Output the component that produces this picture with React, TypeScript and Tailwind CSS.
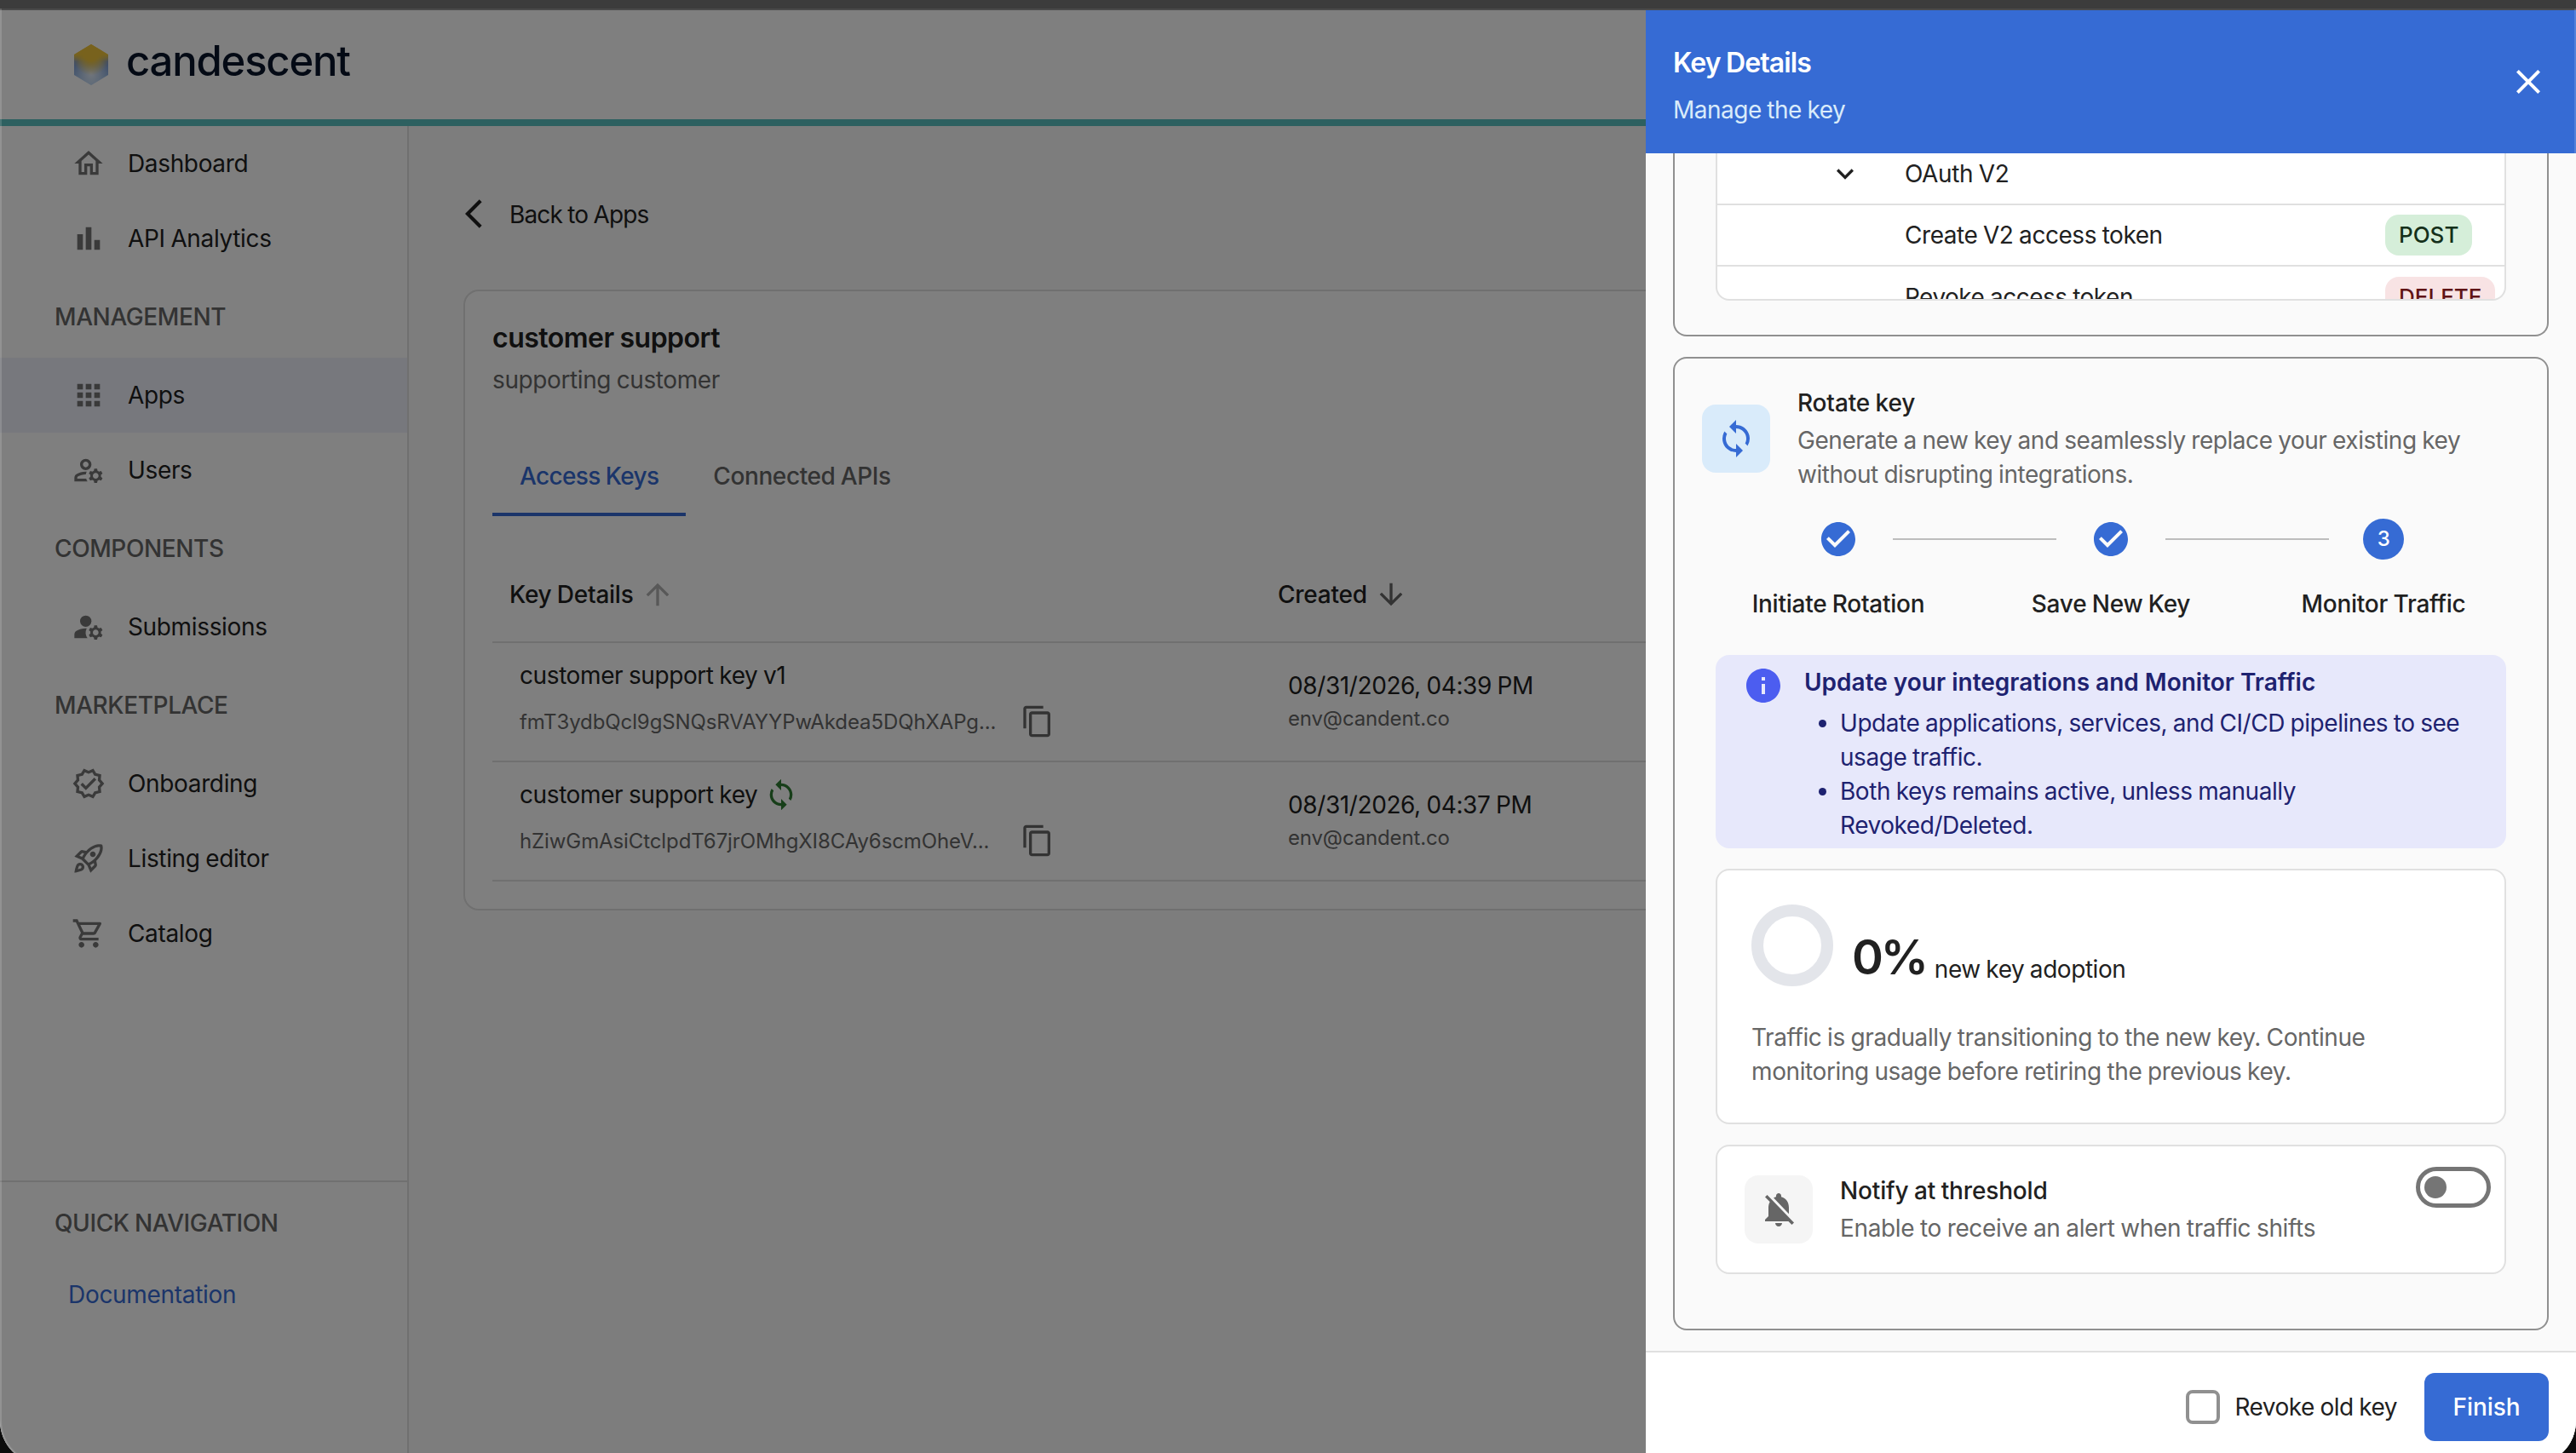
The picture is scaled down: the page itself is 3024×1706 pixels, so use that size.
import type { ReactNode } from 'react';
import type { IconType } from 'react-icons';
import {
  MdApps,
  MdArrowBackIosNew,
  MdArrowDownward,
  MdArrowUpward,
  MdBarChart,
  MdCheckCircle,
  MdClose,
  MdContentCopy,
  MdExpandMore,
  MdInfo,
  MdManageAccounts,
  MdNotificationsOff,
  MdOutlineHome,
  MdOutlineManageAccounts,
  MdOutlineRocketLaunch,
  MdOutlineShoppingCart,
  MdOutlineVerified,
  MdSync,
} from 'react-icons/md';

function NavItem({ icon: Icon, label, active }: { icon: IconType; label: string; active?: boolean }) {
  return (
    <a className={`flex h-[88px] items-center gap-[26px] pl-[84px] tracking-[-0.35px] ${active ? 'bg-[#eef0fb]' : ''}`}>
      <Icon size={40} className="text-[#757575]" />
      <span>{label}</span>
    </a>
  );
}

function NavHeading({ children }: { children: ReactNode }) {
  return <div className="flex h-24 items-center pl-16 font-medium text-[#666]">{children}</div>;
}

function Logo() {
  return (
    <div className="flex items-center gap-[21px] pl-[87px]">
      <svg width="40" height="48" viewBox="0 0 40 48">
        <defs>
          <linearGradient id="body" x1="0" y1="0" x2="0" y2="1">
            <stop offset="0.25" stopColor="#f0c53a" />
            <stop offset="0.42" stopColor="#7f9bd0" />
            <stop offset="1" stopColor="#9fc4ec" />
          </linearGradient>
          <radialGradient id="glow" cx="0.5" cy="0.72" r="0.5">
            <stop offset="0" stopColor="#ffffff" stopOpacity="0.75" />
            <stop offset="1" stopColor="#ffffff" stopOpacity="0" />
          </radialGradient>
          <radialGradient id="cap" cx="0.5" cy="0.16" r="0.6">
            <stop offset="0.4" stopColor="#f0c53a" />
            <stop offset="1" stopColor="#f0c53a" stopOpacity="0" />
          </radialGradient>
        </defs>
        <path d="M20 0 40 12v24L20 48 0 36V12z" fill="url(#body)" />
        <path d="M20 0 40 12v24L20 48 0 36V12z" fill="url(#glow)" />
        <path d="M20 0 40 12v24L20 48 0 36V12z" fill="url(#cap)" />
      </svg>
      <span className="mt-[-8px] text-[49px] leading-[60px] font-medium tracking-[-1.2px] text-[#08142a]">candescent</span>
    </div>
  );
}

function Sidebar() {
  return (
    <nav className="flex w-[480px] shrink-0 flex-col border-r-2 border-[#e0e0e0] bg-white">
      <NavItem icon={MdOutlineHome} label="Dashboard" />
      <NavItem icon={MdBarChart} label="API Analytics" />
      <NavHeading>MANAGEMENT</NavHeading>
      <NavItem icon={MdApps} label="Apps" active />
      <NavItem icon={MdOutlineManageAccounts} label="Users" />
      <NavHeading>COMPONENTS</NavHeading>
      <NavItem icon={MdManageAccounts} label="Submissions" />
      <NavHeading>MARKETPLACE</NavHeading>
      <NavItem icon={MdOutlineVerified} label="Onboarding" />
      <NavItem icon={MdOutlineRocketLaunch} label="Listing editor" />
      <NavItem icon={MdOutlineShoppingCart} label="Catalog" />
      <div className="mt-[246px] border-t-2 border-[#e0e0e0]">
        <NavHeading>QUICK NAVIGATION</NavHeading>
        <a className="block pt-4 pl-20 tracking-[-0.3px] text-[#366bd4]">Documentation</a>
      </div>
    </nav>
  );
}

const keys = [
  { name: 'customer support key v1', value: 'fmT3ydbQcl9gSNQsRVAYYPwAkdea5DQhXAPg...', date: '08/31/2026, 04:39 PM', rotating: false },
  { name: 'customer support key', value: 'hZiwGmAsiCtclpdT67jrOMhgXI8CAy6scmOheV...', date: '08/31/2026, 04:37 PM', rotating: true },
];

function AppPage() {
  return (
    <main className="flex-1 bg-[#fafafa] pt-[83px] pl-16">
      <a className="-ml-2 flex h-10 items-center gap-[22px]">
        <MdArrowBackIosNew size={40} />
        <span className="pt-0.5 tracking-[-0.85px]">Back to Apps</span>
      </a>

      <section className="mt-[69px] mr-16 h-[729px] rounded-[18px] border-2 border-[#e0e0e0] bg-white px-8 pt-[31px]">
        <h1 className="text-[32px] leading-[48px] font-semibold tracking-[-0.5px]">customer support</h1>
        <p className="mt-[5px] text-[#666]">supporting customer</p>

        <div className="mt-[45px] flex font-medium text-[#666]">
          <div className="h-[95px] border-b-4 border-[#366bd4] px-8 pt-7 tracking-[-0.65px] text-[#366bd4]">Access Keys</div>
          <div className="px-8 pt-7">Connected APIs</div>
        </div>

        <div className="mt-[35px] grid h-[114px] grid-cols-[902px_1fr] items-center border-b-2 border-[#e0e0e0] pt-0.5 pl-5 font-medium tracking-[-0.25px]">
          <div className="flex items-center gap-2">
            Key Details
            <MdArrowUpward size={40} className="text-[#b0b0b0]" />
          </div>
          <div className="flex items-center gap-2">
            Created
            <MdArrowDownward size={40} className="text-[#666]" />
          </div>
        </div>

        {keys.map((key) => (
          <div key={key.name} className="grid h-[140px] grid-cols-[902px_1fr] border-b-2 border-[#e0e0e0] pl-8">
            <div className="pt-[18px]">
              <div className="flex h-10 items-center gap-2">
                {key.name}
                {key.rotating && <MdSync size={40} className="text-[#2e7d32]" />}
              </div>
              <div className="mt-[14px] flex h-10 items-center">
                <span className="w-[588px] pt-px text-2xl tracking-[-0.1px] text-[#666]">{key.value}</span>
                <MdContentCopy size={40} className="text-[#666]" />
              </div>
            </div>
            <div className="pt-[30px]">
              <div className="leading-10">{key.date}</div>
              <div className="mt-px text-2xl leading-9 tracking-[-0.15px] text-[#666]">env@candent.co</div>
            </div>
          </div>
        ))}
      </section>
    </main>
  );
}

function Step({ label, children }: { label: string; children: ReactNode }) {
  return (
    <div className="flex w-32 shrink-0 flex-col items-center gap-8">
      <div className="flex size-12 items-center justify-center text-[#366bd4]">{children}</div>
      <span className="font-medium tracking-[-0.25px] whitespace-nowrap">{label}</span>
    </div>
  );
}

function RotateKeyCard() {
  return (
    <section className="mt-6 h-[1143px] rounded-2xl border-2 border-[#909090] px-12">
      <div className="-ml-4 flex gap-8 pt-8">
        <div className="mt-[22px] flex size-20 items-center justify-center rounded-2xl bg-[#d9ebfa]">
          <MdSync size={48} className="text-[#366bd4]" />
        </div>
        <div className="flex-1 leading-10">
          <h3 className="font-medium tracking-[-0.15px]">Rotate key</h3>
          <p className="mt-1 tracking-[-0.45px] text-[#666]">
            Generate a new key and seamlessly replace your existing key
            <br />
            without disrupting integrations.
          </p>
        </div>
      </div>

      <div className="mt-8 flex justify-center">
        <Step label="Initiate Rotation">
          <MdCheckCircle size={48} />
        </Step>
        <div className="mt-[23px] h-0.5 w-48 bg-[#bdbdbd]" />
        <Step label="Save New Key">
          <MdCheckCircle size={48} />
        </Step>
        <div className="mt-[23px] h-0.5 w-48 bg-[#bdbdbd]" />
        <Step label="Monitor Traffic">
          <span className="flex size-12 items-center justify-center rounded-full bg-[#366bd4] text-2xl font-medium text-white">3</span>
        </Step>
      </div>

      <div className="mt-10 flex h-[227px] gap-6 rounded-2xl bg-[#e7e8fb] px-8 text-[#1e2270]">
        <MdInfo size={48} className="mt-3 shrink-0 text-[#4c5df0]" />
        <div className="pt-3 leading-10">
          <h4 className="font-semibold tracking-normal [word-spacing:0]">Update your integrations and Monitor Traffic</h4>
          <ul className="mt-2 list-disc pl-[42px] tracking-[-0.45px]">
            <li>
              Update applications, services, and CI/CD pipelines to see
              <br />
              usage traffic.
            </li>
            <li>
              Both keys remains active, unless manually
              <br />
              Revoked/Deleted.
            </li>
          </ul>
        </div>
      </div>

      <div className="mt-6 h-[300px] rounded-2xl border-2 border-[#e0e0e0] bg-white px-10 pt-10">
        <div className="flex items-end gap-[22px]">
          <div className="size-24 rounded-full border-[14px] border-[#e3e5ea]" />
          <div className="flex items-end gap-2.5">
            <span className="text-[56px] leading-[68px] font-semibold tracking-[-3.2px]">0%</span>
            <span className="leading-10 tracking-[-0.45px]">new key adoption</span>
          </div>
        </div>
        <p className="mt-10 leading-10 text-[#666]">
          Traffic is gradually transitioning to the new key. Continue
          <br />
          monitoring usage before retiring the previous key.
        </p>
      </div>

      <div className="mt-6 flex h-[152px] gap-8 rounded-2xl border-2 border-[#e0e0e0] bg-white pr-4 pl-8">
        <div className="mt-[34px] flex size-20 items-center justify-center rounded-2xl bg-[#f5f5f5]">
          <MdNotificationsOff size={48} className="text-[#666]" />
        </div>
        <div className="flex-1 pt-8 leading-10">
          <h4 className="font-medium tracking-[-0.15px]">Notify at threshold</h4>
          <p className="mt-1 tracking-[-0.35px] text-[#666]">Enable to receive an alert when traffic shifts</p>
        </div>
        <button className="mt-6 flex h-12 w-[88px] items-center rounded-full border-[5px] border-[#757575] pl-[5px]">
          <span className="size-[26px] rounded-full bg-[#757575]" />
        </button>
      </div>
    </section>
  );
}

function KeyDrawer() {
  return (
    <aside className="absolute top-3 right-0 flex h-[1694px] w-[1092px] flex-col bg-[#fafafa]">
      <header className="flex h-[168px] shrink-0 items-center justify-between bg-[#366bd4] px-8 text-white">
        <div className="pt-2.5">
          <h2 className="text-[32px] leading-[48px] font-semibold tracking-[-0.9px]">Key Details</h2>
          <p className="mt-[7px] leading-[48px] tracking-[-0.5px] text-[#d9ebfa]">Manage the key</p>
        </div>
        <MdClose size={48} />
      </header>

      <div className="h-[1406px] overflow-hidden px-8">
        <section className="h-[215px] rounded-b-2xl border-x-2 border-b-2 border-[#909090] px-12">
          <div className="h-[173px] overflow-hidden rounded-b-2xl border-x-2 border-b-2 border-[#e0e0e0] bg-white">
            <div className="flex h-[61px] items-center border-b-2 border-[#e0e0e0] pb-[11px] pl-[130px]">
              <MdExpandMore size={40} />
              <span className="ml-[50px]">OAuth V2</span>
            </div>
            <div className="flex h-[72px] items-center border-b-2 border-[#e0e0e0] pl-[220px]">
              <span className="w-[564px] tracking-[-0.45px]">Create V2 access token</span>
              <span className="rounded-2xl bg-[#d5eed9] px-4 text-[26px] leading-[48px] font-medium tracking-normal text-[#14301a]">POST</span>
            </div>
            <div className="flex h-[72px] items-center pl-[220px]">
              <span className="w-[564px] tracking-[-0.5px]">Revoke access token</span>
              <span className="rounded-2xl bg-[#f8e3e4] px-4 text-[26px] leading-[48px] font-medium tracking-normal text-[#5f1416]">DELETE</span>
            </div>
          </div>
        </section>
        <RotateKeyCard />
      </div>

      <footer className="flex h-[120px] shrink-0 items-start justify-end border-t-2 border-[#e0e0e0] bg-white pt-6 pr-8">
        <label className="mr-8 flex h-20 items-center gap-[17px] tracking-[-0.5px]">
          <span className="size-10 rounded-lg border-4 border-[#909090]" />
          Revoke old key
        </label>
        <button className="h-20 w-[146px] rounded-xl bg-[#366bd4] font-medium tracking-[-0.1px] text-white">Finish</button>
      </footer>
    </aside>
  );
}

export default function App() {
  return (
    <div className="h-[1706px] w-[3024px] overflow-hidden bg-[#0c0c0c]">
      <div className="relative h-[1720px] overflow-hidden rounded-b-[52px] bg-white font-['Inter',sans-serif] text-[28px] leading-10 tracking-[-0.4px] text-[#212121] [word-spacing:-0.8px]">
        <div className="h-3 border-b-2 border-[#4a4a4a] bg-[#3c3c3c]" />
        <div className="flex h-[136px] items-center border-b-8 border-[#5ac0c0] bg-white">
          <Logo />
        </div>
        <div className="flex h-[1572px]">
          <Sidebar />
          <AppPage />
        </div>
        <div className="absolute inset-x-0 top-3 bottom-0 bg-black/50" />
        <KeyDrawer />
        {/* window edge highlight */}
        <div className="pointer-events-none absolute inset-x-0 top-2.5 bottom-0 rounded-b-[52px] border-x-2 border-b-2 border-white/15" />
      </div>
    </div>
  );
}
